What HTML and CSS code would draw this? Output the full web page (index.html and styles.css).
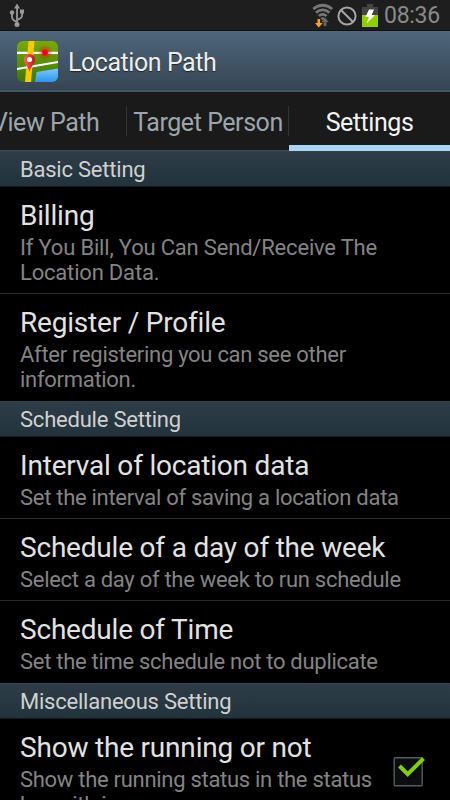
FILE: index.html
```html
<!DOCTYPE html>
<html lang="en">
<head>
    <meta charset="UTF-8">
    <title>Location Path</title>
    <link rel="stylesheet" href="styles.css">
</head>
<body>
<div class="screen">
    <div class="status">
        <svg class="usb" width="18" height="26" viewBox="0 0 18 26">
            <path d="M9 5v18M4 12v3q0 3 5 5M14 11v3q0 2-5 4" fill="none" stroke="#999" stroke-width="1.800"/>
            <path d="M9 1.500l3 5H6zM12 7.500h4v4h-4z" fill="#999"/>
            <circle cx="4" cy="10.500" r="2.200" fill="#999"/>
            <circle cx="9" cy="22.500" r="2.500" fill="#999"/>
        </svg>
        <svg class="wifi" width="22" height="25" viewBox="0 0 22 25">
            <g fill="none" stroke="#777" stroke-width="2.700">
                <path d="M1.200 6q9.500-7.500 19 0"/>
                <path d="M4 9.600q6.700-5.600 13.400 0"/>
                <path d="M6.800 13q3.900-3.300 7.800 0"/>
            </g>
            <path d="M8.500 15q2.200-1.600 4.400 0L10.700 17.500z" fill="#777"/>
            <path d="M5.500 16h2.600v4h2.600L6.800 24.500 3 20h2.500z" fill="#f9a02c"/>
            <path d="M11.600 23V19H9.500l3.600-4.500L16.800 19h-2.300v4z" fill="#666"/>
        </svg>
        <svg class="block" width="20" height="20" viewBox="0 0 20 20">
            <circle cx="10" cy="10" r="8.600" fill="none" stroke="#a5a5a5" stroke-width="2"/>
            <path d="M4.200 4.200l11.600 11.600" stroke="#a5a5a5" stroke-width="2"/>
        </svg>
        <svg class="battery" width="16" height="23" viewBox="0 0 16 23">
            <path d="M5 0h6v3h5v8H0V3h5z" fill="#444"/>
            <path d="M0 11h16v12H0z" fill="#8fd000"/>
            <path d="M7 5.500h5L9.700 11H13L4.500 19.500 7 13H3.500z" fill="#fff"/>
        </svg>
        <span class="clock">08:36</span>
    </div>
    <div class="bar">
        <svg class="logo" width="41" height="41" viewBox="0 0 41 41">
            <defs>
                <clipPath id="round"><rect width="41" height="41" rx="6"/></clipPath>
                <linearGradient id="land" x2="0" y2="1"><stop stop-color="#78aa0c"/><stop offset="1" stop-color="#3f7607"/></linearGradient>
                <linearGradient id="sea" x2="0" y2="1"><stop stop-color="#79c7fa"/><stop offset="1" stop-color="#2f96ee"/></linearGradient>
                <linearGradient id="pin" x2="1"><stop stop-color="#ff6556"/><stop offset="1" stop-color="#c90e16"/></linearGradient>
                <radialGradient id="glow"><stop stop-color="#f00"/><stop offset="1" stop-color="#f00" stop-opacity="0"/></radialGradient>
            </defs>
            <g clip-path="url(#round)">
                <rect width="41" height="41" fill="url(#land)"/>
                <path d="M18 41L19.500 31l21.500-3.500V41z" fill="url(#sea)"/>
                <path d="M0 11.800h41" stroke="#fff" stroke-width="2.200"/>
                <path d="M11.500 0h6L14 41H8z" fill="#ffc800"/>
                <path d="M0 28L41 21" stroke="#fff" stroke-width="2.200"/>
                <circle cx="28" cy="11.500" r="8" fill="url(#glow)" opacity=".75"/>
                <circle cx="28" cy="11.500" r="2.800" fill="#f00012"/>
                <path d="M12.500 31C11.500 26 7 23 7 18.500a5.500 5.500 0 0 1 11 0C18 23 13.500 26 12.500 31z" fill="url(#pin)"/>
                <circle cx="12.500" cy="18.500" r="2.600" fill="#fff"/>
            </g>
        </svg>
        <span class="name">Location Path</span>
    </div>
    <div class="tabs">
        <div class="tab view"><span>View Path</span></div>
        <div class="tab target"><span>Target Person</span></div>
        <div class="tab on"><span>Settings</span></div>
    </div>
    <div class="list">
        <h2>Basic Setting</h2>
        <div class="row">
            <h3>Billing</h3>
            <p class="wide">If You Bill, You Can Send/Receive The<br>Location Data.</p>
        </div>
        <div class="row last">
            <h3>Register / Profile</h3>
            <p>After registering you can see other<br>information.</p>
        </div>
        <h2>Schedule Setting</h2>
        <div class="row">
            <h3>Interval of location data</h3>
            <p>Set the interval of saving a location data</p>
        </div>
        <div class="row">
            <h3>Schedule of a day of the week</h3>
            <p>Select a day of the week to run schedule</p>
        </div>
        <div class="row last">
            <h3>Schedule of Time</h3>
            <p>Set the time schedule not to duplicate</p>
        </div>
        <h2>Miscellaneous Setting</h2>
        <div class="row check">
            <div>
                <h3>Show the running or not</h3>
                <p>Show the running status in the status<br>bar with icon.</p>
            </div>
            <svg width="34" height="34" viewBox="0 0 34 34">
                <rect x="1.200" y="4.700" width="28" height="28" rx="1" fill="#0b0d0f" stroke="#565b60" stroke-width="1.400"/>
                <path d="M6.500 13l8.200 8.200L30.500 5.500" fill="none" stroke="#82cb16" stroke-width="4"/>
            </svg>
        </div>
    </div>
</div>
</body>
</html>
```
FILE: styles.css
```css
*{
    margin: 0;
    padding: 0;
    box-sizing: border-box;
}
body{
    background: #000;
    font-family: Roboto, sans-serif;
}
.screen{
    width: 450px;
    height: 800px;
    overflow: hidden;
    background: #000;
}
.status{
    display: flex;
    align-items: flex-start;
    height: 31px;
    background: #1e1e1e;
    border-bottom: 1px solid #14100c;
}
.usb{
    margin: 2px 0 0 8px;
}
.wifi{
    margin: 3px 0 0 286px;
}
.block{
    margin: 6px 0 0 3px;
}
.battery{
    margin: 4px 0 0 5px;
}
.clock{
    margin-left: 6px;
    color: #8a8a8a;
    font-size: 23px;
    letter-spacing: -.3px;
    line-height: 31px;
    white-space: nowrap;
}
.bar{
    display: flex;
    align-items: center;
    height: 61px;
    padding: 0 0 0 17px;
    background: linear-gradient(#4f667c, #364553);
    border-bottom: 2px solid #3f5767;
}
.logo{
    margin-top: 1px;
}
.name{
    margin: 4px 0 0 10px;
    color: #eee;
    font-size: 25px;
    letter-spacing: -.45px;
    text-shadow: 0 1px 1px #222;
}
.tabs{
    display: flex;
    height: 59px;
    background: #1a1a1a;
    color: #9da5ac;
    font-size: 25px;
    letter-spacing: -.45px;
    line-height: 61px;
    text-align: center;
    white-space: nowrap;
}
.tab{
    height: 59px;
    background: linear-gradient(#333, #333) right 14px / 1px 30px no-repeat;
    border-bottom: 1px solid #3f464b;
}
.view{
    width: 127px;
    text-align: left;
}
.view span{
    margin-left: -8px;
}
.target{
    width: 162px;
}
.on{
    width: 161px;
    background: none;
    color: #f2f2f2;
    border-bottom: 6px solid #a8d5f2;
}
h2{
    height: 36px;
    padding-left: 20px;
    background: linear-gradient(#2e3c48, #22333c);
    border-top: 1px solid #34424c;
    border-bottom: 1px solid #101b20;
    color: #d0d0d0;
    font-size: 22px;
    font-weight: 400;
    letter-spacing: -.22px;
    line-height: 35px;
}
.row{
    padding: 12px 0 8px 20px;
    border-bottom: 1px solid #292929;
    white-space: nowrap;
}
.last{
    border-color: #000;
}
h3{
    color: #e2e2e2;
    font-size: 28px;
    font-weight: 400;
    letter-spacing: -.2px;
    line-height: 33px;
}
p{
    margin-top: 3px;
    color: #848484;
    font-size: 22px;
    letter-spacing: -.29px;
    line-height: 25px;
}
.wide{
    letter-spacing: -.19px;
}
.check{
    display: flex;
    justify-content: space-between;
    padding-right: 23px;
}
.check svg{
    margin-top: 22px;
}
```
